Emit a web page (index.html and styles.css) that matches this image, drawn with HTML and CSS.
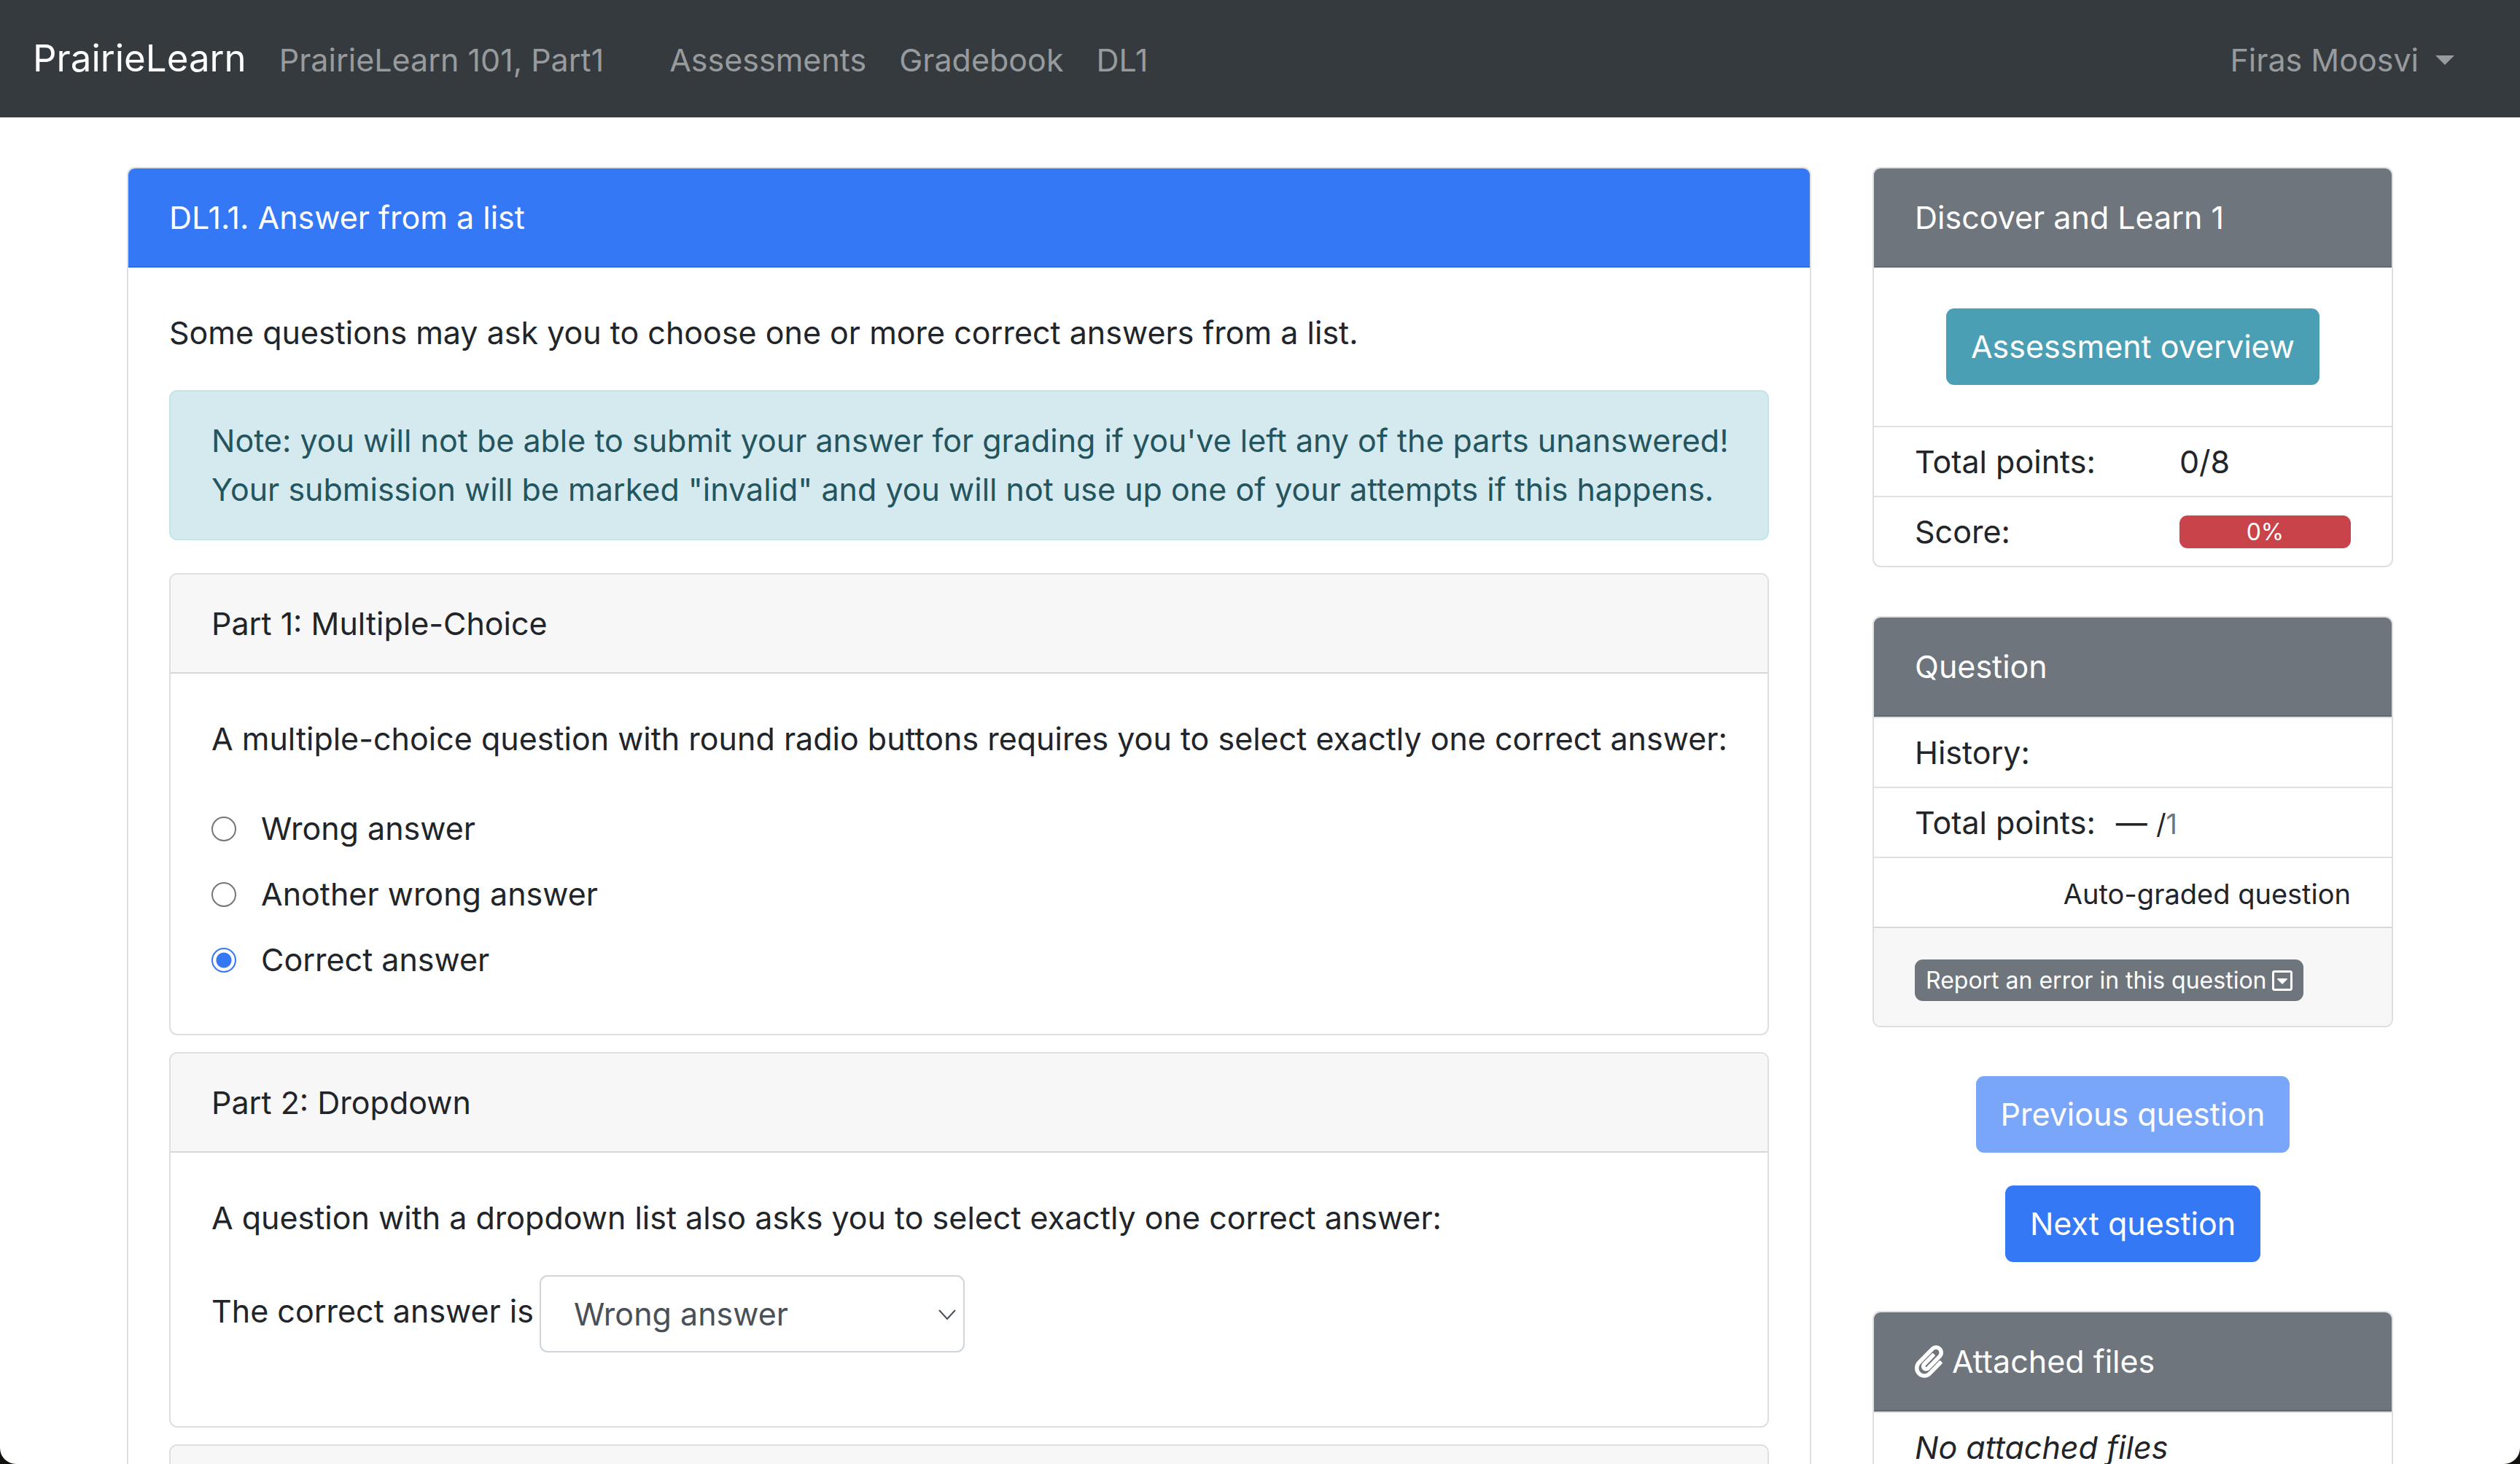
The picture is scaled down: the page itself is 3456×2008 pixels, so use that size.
FILE: index.html
```html
<!DOCTYPE html>
<html lang="en">
<head>
<meta charset="utf-8">
<title>DL1.1. Answer from a list | PrairieLearn</title>
<link rel="stylesheet" href="styles.css">
</head>
<body>
<div class="window">
  <nav class="navbar">
    <a class="brand" href="#">PrairieLearn</a>
    <span class="course">PrairieLearn 101, Part1</span>
    <a class="nav-link" href="#">Assessments</a>
    <a class="nav-link" href="#">Gradebook</a>
    <a class="nav-link" href="#">DL1</a>
    <button class="user-menu" type="button">Firas Moosvi<span class="caret"></span></button>
  </nav>

  <div class="container">
    <main class="col-main">
      <section class="card">
        <h1 class="card-header primary">DL1.1. Answer from a list</h1>
        <form class="card-body">
          <p>Some questions may ask you to choose one or more correct answers from a list.</p>
          <div class="alert">Note: you will not be able to submit your answer for grading if you've left any of the parts unanswered! Your submission will be marked "invalid" and you will not use up one of your attempts if this happens.</div>

          <div class="parts">
            <section class="card">
              <h2 class="card-header">Part 1: Multiple-Choice</h2>
              <div class="card-body">
                <p>A multiple-choice question with round radio buttons requires you to select exactly one correct answer:</p>
                <div class="choice"><input type="radio" name="mc" id="mc-a"><label for="mc-a">Wrong answer</label></div>
                <div class="choice"><input type="radio" name="mc" id="mc-b"><label for="mc-b">Another wrong answer</label></div>
                <div class="choice"><input type="radio" name="mc" id="mc-c" checked><label for="mc-c">Correct answer</label></div>
              </div>
            </section>

            <section class="card">
              <h2 class="card-header">Part 2: Dropdown</h2>
              <div class="card-body">
                <p>A question with a dropdown list also asks you to select exactly one correct answer:</p>
                <div class="dropdown-row">
                  <label for="dd">The correct answer is</label>
                  <span class="select-wrap">
                    <select id="dd"><option>Wrong answer</option></select>
                    <svg class="chevron" viewBox="0 0 26 16" aria-hidden="true"><path d="M2 2l11 12L24 2" fill="none" stroke="currentColor" stroke-width="2"/></svg>
                  </span>
                </div>
              </div>
            </section>

            <section class="card">
              <h2 class="card-header">&nbsp;</h2>
            </section>
          </div>
        </form>
      </section>
    </main>

    <aside class="col-side">
      <section class="card">
        <h2 class="card-header secondary">Discover and Learn 1</h2>
        <div class="card-body centered"><a class="btn info" href="#">Assessment overview</a></div>
        <table class="score-table">
          <tr><th scope="row">Total points:</th><td>0/8</td></tr>
          <tr><th scope="row">Score:</th><td><div class="progress">0%</div></td></tr>
        </table>
      </section>

      <section class="card">
        <h2 class="card-header secondary">Question</h2>
        <table class="question-table">
          <tr><th scope="row">History:</th><td></td></tr>
          <tr><th scope="row">Total points:</th><td>— <small>/<span class="muted">1</span></small></td></tr>
          <tr><td class="grading" colspan="2"><small>Auto-graded question</small></td></tr>
        </table>
        <div class="card-footer">
          <button class="btn-xs" type="button">Report an error in this question
            <svg viewBox="0 0 448 512" aria-hidden="true"><path fill="currentColor" d="M125.1 208h197.8c10.7 0 16.1 13 8.5 20.5l-98.9 98.3c-4.7 4.7-12.2 4.7-16.9 0l-98.9-98.3c-7.7-7.5-2.3-20.5 8.4-20.5zM448 80v352c0 26.5-21.5 48-48 48H48c-26.5 0-48-21.5-48-48V80c0-26.5 21.5-48 48-48h352c26.5 0 48 21.5 48 48zm-48 346V86c0-3.3-2.7-6-6-6H54c-3.3 0-6 2.7-6 6v340c0 3.3 2.7 6 6 6h340c3.3 0 6-2.7 6-6z"/></svg>
          </button>
        </div>
      </section>

      <div class="pager">
        <button class="btn blue" type="button" disabled>Previous question</button>
        <a class="btn blue" href="#">Next question</a>
      </div>

      <section class="card">
        <h2 class="card-header secondary with-icon">
          <svg viewBox="0 0 448 512" aria-hidden="true"><path fill="currentColor" d="M43.246 466.142c-58.43-60.289-57.341-157.511 1.386-217.581L254.392 34c44.316-45.332 116.351-45.336 160.671 0 43.89 44.894 43.943 117.329 0 162.276L232.214 383.128c-29.855 30.537-78.633 30.111-107.982-.998-28.275-29.97-27.368-77.473 1.452-106.953l143.743-146.835c6.182-6.314 16.312-6.422 22.626-.241l22.861 22.379c6.315 6.182 6.422 16.312.241 22.626L171.427 319.927c-4.932 5.045-5.236 13.428-.648 18.292 4.372 4.634 11.245 4.711 15.688.165l182.849-186.851c19.613-20.062 19.613-52.725-.011-72.798-19.189-19.627-49.957-19.637-69.154 0L90.39 293.295c-34.763 35.56-35.299 93.12-1.191 128.313 34.01 35.093 88.985 35.137 123.058.286l172.06-175.999c6.177-6.319 16.307-6.433 22.626-.256l22.877 22.364c6.319 6.177 6.434 16.307.256 22.626l-172.06 175.998c-59.576 60.938-155.943 60.216-214.77-.485z"/></svg>
          Attached files
        </h2>
        <table class="files-table">
          <tr><td><em>No attached files</em></td></tr>
        </table>
      </section>
    </aside>
  </div>
</div>
</body>
</html>
```

FILE: styles.css
```css
:root {
  --blue: #3478f6;
  --gray: #6e757c;
  --text: #212529;
  --border: #dfdfdf;
  --rule: #dee2e6;
}

* {
  box-sizing: border-box;
}

html {
  background: #11120d;
}

body {
  margin: 0;
  font: 43px/67px Inter, "Liberation Sans", sans-serif;
  color: var(--text);
}

/* Visible browser window, with its rounded lower corners */
.window {
  height: 100vh;
  overflow: hidden;
  background: #fff;
  border-radius: 0 0 22px 22px;
}

h1, h2, p, table {
  margin: 0;
}

button, select {
  font: inherit;
}

a {
  text-decoration: none;
}

small {
  font-size: 38px;
  line-height: 1;
}

/* Navigation bar */
.navbar {
  display: flex;
  align-items: baseline;
  gap: 45px;
  padding: 36px 90px 37px 45px;
  background: #353a3e;
  color: #989b9d;
}

.brand {
  font-size: 51px;
  line-height: 88px;
  color: #fff;
}

.course {
  margin-right: 45px;
}

.nav-link {
  color: inherit;
}

.user-menu {
  display: flex;
  align-items: center;
  gap: 23px;
  margin-left: auto;
  padding: 0;
  border: 0;
  background: none;
  color: inherit;
}

.caret {
  border: 13px solid transparent;
  border-top-color: currentColor;
  border-bottom: 0;
}

/* Page columns */
.container {
  display: flex;
  max-width: 3192px;
  margin: 68px auto 0;
}

.col-main, .col-side {
  min-width: 0;
  padding: 0 42px;
}

.col-main {
  flex: 0 0 75%;
}

.col-side {
  display: flex;
  flex: 0 0 25%;
  flex-direction: column;
  gap: 67px;
}

/* Cards */
.card {
  overflow: hidden;
  border: 2px solid var(--border);
  border-radius: 11px;
  background: #fff;
}

.card-header {
  padding: 34px 56px 33px;
  border-bottom: 2px solid #d8d8d8;
  background: #f7f7f7;
  font-size: inherit;
  font-weight: 400;
}

.card-header.primary {
  border-color: #2f6cdd;
  background: var(--blue);
  color: #fff;
}

.card-header.secondary {
  border-color: #62686f;
  background: var(--gray);
  color: #fff;
}

.with-icon {
  display: flex;
  align-items: center;
  gap: 12px;
}

.with-icon svg {
  width: 39px;
  height: 45px;
}

.card-body {
  padding: 56px;
}

.card-body p {
  margin-bottom: 45px;
}

.centered {
  text-align: center;
}

.alert {
  margin-bottom: 45px;
  padding: 34px 34px 34px 56px;
  border: 2px solid #c5e4e9;
  border-radius: 11px;
  background: #d5eaee;
  color: #24555f;
}

.parts {
  display: grid;
  gap: 23px;
}

.parts .card-body {
  padding-right: 34px;
}

/* Radio choices */
.choice {
  display: flex;
  align-items: center;
  gap: 34px;
  padding: 11px 0 12px;
}

.choice input {
  width: 34px;
  height: 34px;
  margin: 0;
  appearance: none;
  border: 2px solid #767676;
  border-radius: 50%;
  background: #fff;
}

.choice input:checked {
  border-color: var(--blue);
  background: radial-gradient(circle, var(--blue) 10px, #fff 11px);
}

/* Dropdown */
.dropdown-row {
  display: flex;
  gap: 8px;
  padding-bottom: 45px;
}

.dropdown-row label {
  padding-top: 16px;
}

.select-wrap {
  display: flex;
  position: relative;
}

.select-wrap select {
  width: 583px;
  height: 106px;
  padding: 0 45px;
  appearance: none;
  border: 2px solid #ced4da;
  border-radius: 11px;
  background: #fff;
  color: #495057;
}

.chevron {
  position: absolute;
  top: 46px;
  right: 11px;
  width: 26px;
  height: 16px;
  color: #495057;
}

/* Buttons */
.btn {
  display: inline-block;
  padding: 19px 34px;
  border: 0;
  border-radius: 11px;
  color: #fff;
}

.btn.info {
  vertical-align: top;
  background: #4b9fb5;
}

.btn.blue {
  background: var(--blue);
}

.btn:disabled {
  opacity: .65;
}

.btn-xs {
  display: flex;
  align-items: center;
  gap: 8px;
  height: 57px;
  padding: 0 15px;
  border: 0;
  border-radius: 11px;
  background: var(--gray);
  color: #fff;
  font-size: 32px;
}

.btn-xs svg {
  width: 28px;
  height: 32px;
}

.pager {
  display: flex;
  flex-direction: column;
  align-items: center;
  gap: 45px;
}

/* Sidebar tables */
table {
  width: 100%;
  border-collapse: separate;
  border-spacing: 0;
}

th, td {
  padding: 14px 0 13px;
  border-top: 2px solid var(--rule);
  font-weight: 400;
  text-align: left;
  vertical-align: middle;
}

tr > :first-child {
  padding-left: 56px;
}

tr > :last-child {
  padding-right: 56px;
}

.score-table th {
  width: 59%;
}

.question-table th {
  width: 1px;
  padding-right: 28px;
  white-space: nowrap;
}

.question-table .grading {
  text-align: right;
}

.muted {
  color: var(--gray);
}

.progress {
  height: 45px;
  border-radius: 11px;
  background: #c9444a;
  color: #fff;
  font-size: 32px;
  line-height: 45px;
  text-align: center;
}

.card-footer {
  padding: 43px 56px 34px;
  border-top: 2px solid #d8d8d8;
  background: #f7f7f7;
}
```
